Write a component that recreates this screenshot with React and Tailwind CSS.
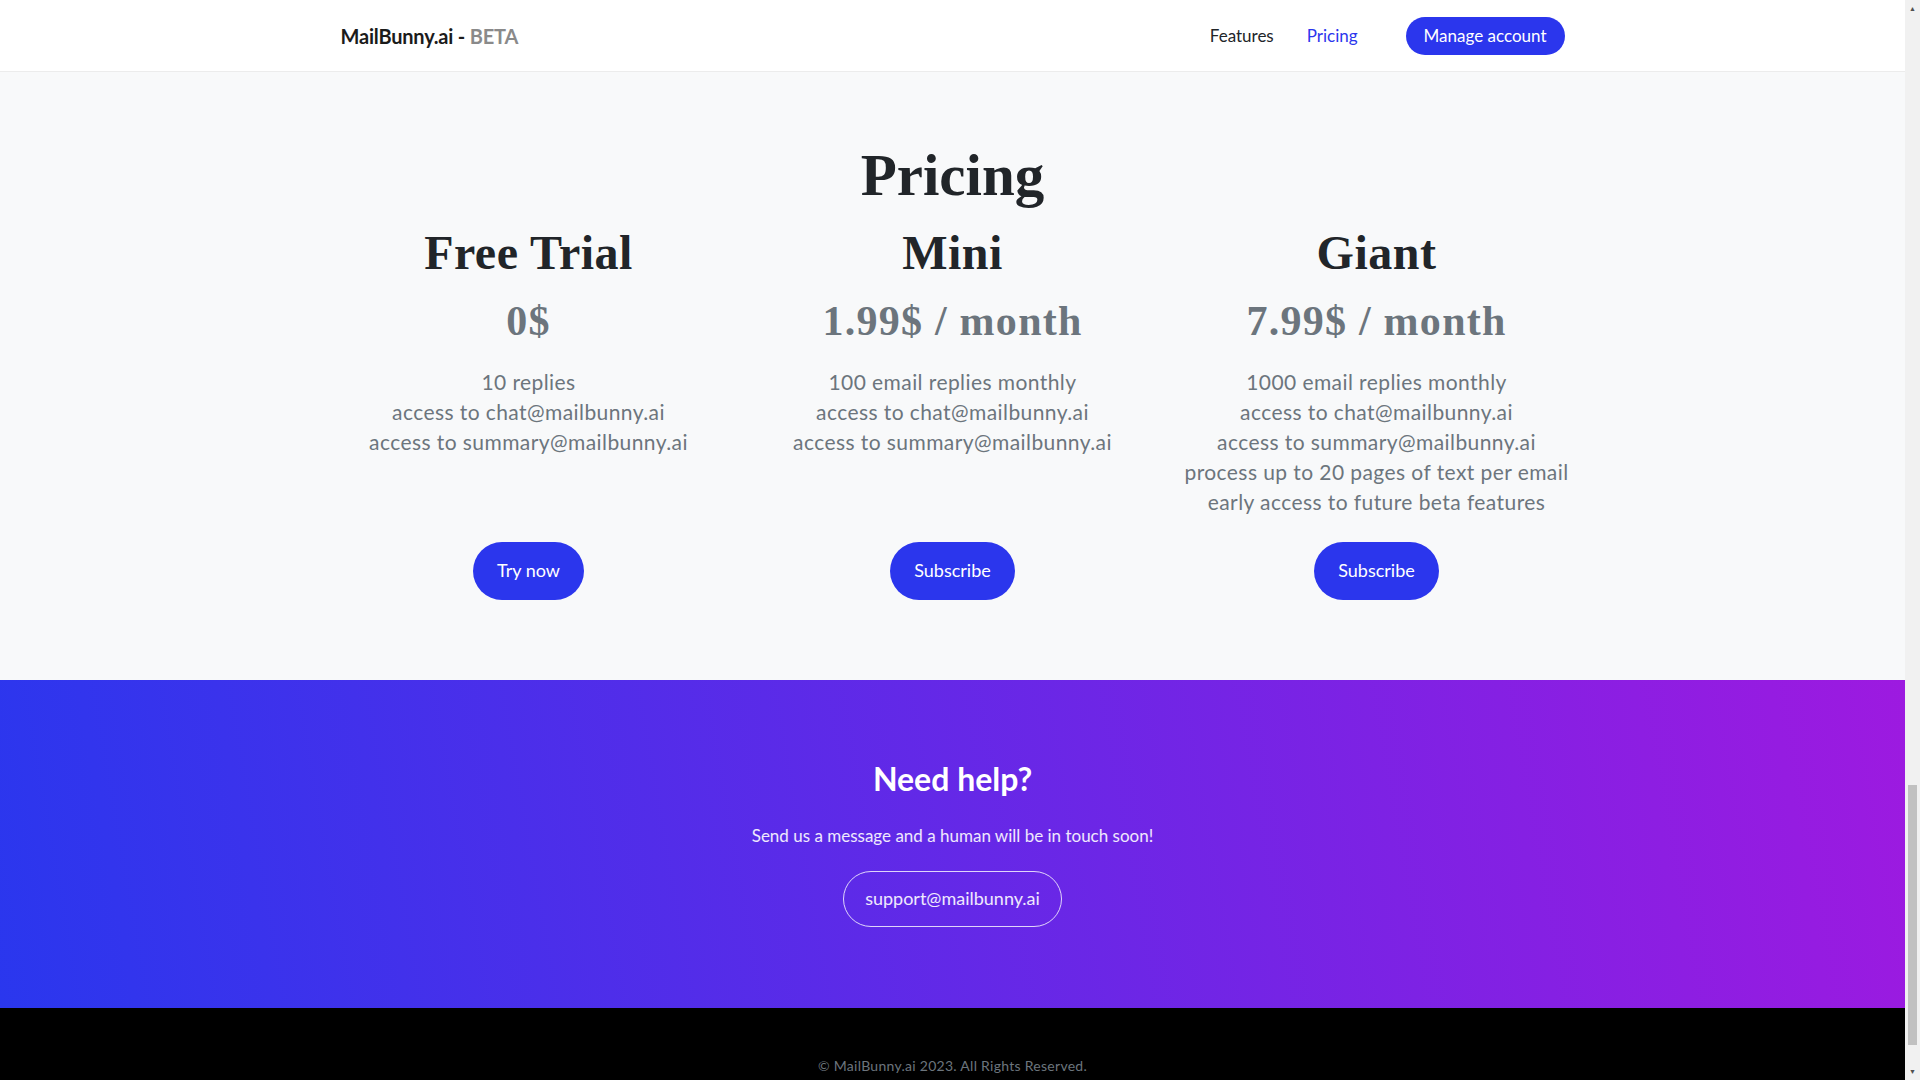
import React from "react";

const PLANS = [
  {
    name: "Free Trial",
    price: "0$",
    features: ["10 replies", "access to chat@mailbunny.ai", "access to summary@mailbunny.ai"],
    cta: "Try now",
  },
  {
    name: "Mini",
    price: "1.99$ / month",
    features: ["100 email replies monthly", "access to chat@mailbunny.ai", "access to summary@mailbunny.ai"],
    cta: "Subscribe",
  },
  {
    name: "Giant",
    price: "7.99$ / month",
    features: [
      "1000 email replies monthly",
      "access to chat@mailbunny.ai",
      "access to summary@mailbunny.ai",
      "process up to 20 pages of text per email",
      "early access to future beta features",
    ],
    cta: "Subscribe",
  },
];

const sans = "font-['Lato','Liberation_Sans',sans-serif]";
const serif = "font-['Liberation_Serif','Times_New_Roman',serif]";

export default function App() {
  return (
    <div className={`flex h-screen overflow-hidden bg-white ${sans}`}>
      <main className="flex flex-1 flex-col">
        <header className="h-[72px] shrink-0 border-b border-[#ececec] bg-white">
          <div className="mx-auto flex h-full w-[1224px] items-center">
            <a className="text-[20px] font-bold tracking-[-0.01em] text-[#1b1b1b]">
              MailBunny.ai - <span className="text-[#8a8a8a]">BETA</span>
            </a>
            <nav className="ml-auto flex items-center text-[17px]">
              <a className="text-[#212529]">Features</a>
              <a className="ml-[33px] text-[#2b36ed]">Pricing</a>
              <button className="ml-[48px] flex h-[38px] items-center rounded-full bg-[#2b36ed] px-[18px] text-[17px] text-white">
                Manage account
              </button>
            </nav>
          </div>
        </header>

        <section className="shrink-0 bg-[#f8f9fa] pb-[80px] pt-[68px]">
          <h2 className={`${serif} text-center text-[59px] font-bold leading-[70px] text-[#212529]`}>Pricing</h2>
          <div className="mx-auto mt-[14px] grid w-[1272px] grid-cols-3">
            {PLANS.map((p) => (
              <div key={p.name} className="flex flex-col items-center text-center">
                <h3 className={`${serif} text-[48px] font-bold leading-[57.6px] tracking-[0.01em] text-[#212529]`}>{p.name}</h3>
                <p className={`${serif} mt-[15px] text-[42px] font-bold leading-[48px] tracking-[0.03em] text-[#6c757d]`}>{p.price}</p>
                <ul className="mt-[22px] min-h-[150px] text-[21px] leading-[30px] tracking-[0.02em] text-[#6c757d]">
                  {p.features.map((f) => (
                    <li key={f}>{f}</li>
                  ))}
                </ul>
                <button className="mt-[25px] flex h-[58px] items-center rounded-full bg-[#2b36ed] px-[24px] text-[18px] text-white">
                  {p.cta}
                </button>
              </div>
            ))}
          </div>
        </section>

        <section className="flex h-[328px] shrink-0 flex-col items-center bg-linear-[80deg] from-[#2a37ee] to-[#9d1ae0] pt-[80px] text-white">
          <h2 className="text-[32px] font-bold leading-[38px]">Need help?</h2>
          <p className="mt-[24px] text-[17px] leading-[27px] text-white/90">Send us a message and a human will be in touch soon!</p>
          <a className="mt-[22px] flex h-[56px] items-center rounded-full border border-white/80 px-[21px] text-[18px] text-white/90">
            support@mailbunny.ai
          </a>
        </section>

        <footer className="flex-1 bg-black pt-[47px] text-center">
          <p className="text-[14px] leading-[21px] tracking-[0.02em] text-[#6c757d]">© MailBunny.ai 2023. All Rights Reserved.</p>
        </footer>
      </main>

      <aside className="flex w-[15px] shrink-0 flex-col items-center bg-[#f1f1f1]">
        <div className="flex h-[17px] items-center justify-center text-[7px] text-[#505050]">▲</div>
        <div className="flex flex-1 flex-col justify-end pb-[18px]">
          <div className="h-[260px] w-[9px] bg-[#c1c1c1]" />
        </div>
        <div className="flex h-[17px] items-center justify-center text-[7px] text-[#505050]">▼</div>
      </aside>
    </div>
  );
}
